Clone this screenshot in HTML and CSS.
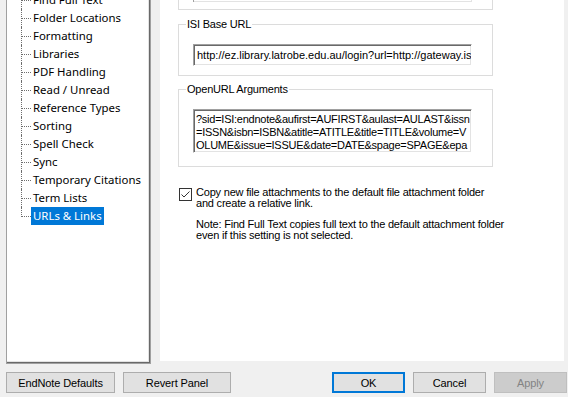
FILE: index.html
```html
<!DOCTYPE html>
<html>
<head>
<meta charset="utf-8">
<link rel="stylesheet" href="styles.css">
</head>
<body>
<div class="window">
  <div class="main">
    <div class="tree">
      <ul class="tree-list">
        <li><span>Find Full Text</span></li>
        <li><span>Folder Locations</span></li>
        <li><span>Formatting</span></li>
        <li><span>Libraries</span></li>
        <li><span>PDF Handling</span></li>
        <li><span>Read / Unread</span></li>
        <li><span>Reference Types</span></li>
        <li><span>Sorting</span></li>
        <li><span>Spell Check</span></li>
        <li><span>Sync</span></li>
        <li><span>Temporary Citations</span></li>
        <li><span>Term Lists</span></li>
        <li class="selected"><span>URLs &amp; Links</span></li>
      </ul>
    </div>
    <div class="panel">
      <div class="group-cut"><div class="textbox-cut"></div></div>
      <fieldset class="group group-isi">
        <legend>ISI Base URL</legend>
        <div class="textbox">http://ez.library.latrobe.edu.au/login?url=http://gateway.is</div>
      </fieldset>
      <fieldset class="group group-open">
        <legend>OpenURL Arguments</legend>
        <div class="textarea">
          <div class="ta-line">?sid=ISI:endnote&amp;aufirst=AUFIRST&amp;aulast=AULAST&amp;issn</div>
          <div class="ta-line">=ISSN&amp;isbn=ISBN&amp;atitle=ATITLE&amp;title=TITLE&amp;volume=V</div>
          <div class="ta-line">OLUME&amp;issue=ISSUE&amp;date=DATE&amp;spage=SPAGE&amp;epa</div>
        </div>
      </fieldset>
      <div class="check-row">
        <span class="checkbox"><svg width="11" height="11" viewBox="0 0 11 11"><polyline points="1.5,5.5 4,8 9.5,2.5" fill="none" stroke="#333" stroke-width="1"/></svg></span>
        <div class="check-text">Copy new file attachments to the default file attachment folder<br>and create a relative link.</div>
      </div>
      <div class="note">Note: Find Full Text copies full text to the default attachment folder<br>even if this setting is not selected.</div>
    </div>
  </div>
  <div class="footer">
    <button class="btn btn-wide">EndNote Defaults</button>
    <button class="btn btn-revert">Revert Panel</button>
    <button class="btn btn-ok">OK</button>
    <button class="btn">Cancel</button>
    <button class="btn btn-disabled">Apply</button>
  </div>
</div>
</body>
</html>
```

FILE: styles.css
```css
html, body {
  margin: 0;
  padding: 0;
  background: #f0f0f0;
}
body {
  font-family: "Liberation Sans", Arial, sans-serif;
  font-size: 11px;
  letter-spacing: -0.2px;
  color: #000;
}
.window {
  width: 568px;
  height: 397px;
  overflow: hidden;
}
.main {
  display: flex;
  align-items: flex-start;
  height: 364px;
}
.tree {
  margin-left: 6px;
  width: 145px;
  height: 364px;
  box-sizing: border-box;
  background: #fff;
  border-left: 1px solid #a0a0a0;
  border-right: 1px solid #a0a0a0;
  border-bottom: 1px solid #a0a0a0;
  box-shadow: inset -1px -1px #696969, inset -2px -2px #e3e3e3;
  overflow: hidden;
}
.tree-list {
  list-style: none;
  margin: -9px 0 0 14px;
  padding: 0;
  font-family: "Noto Sans", "Open Sans", sans-serif;
  font-size: 11.4px;
  letter-spacing: 0;
}
.tree-list li {
  position: relative;
  height: 18px;
  line-height: 18px;
  padding-left: 10px;
  white-space: nowrap;
}
.tree-list li::before {
  content: "";
  position: absolute;
  left: 0;
  top: 0;
  height: 100%;
  border-left: 1px dotted #6e6e6e;
}
.tree-list li:last-child::before {
  height: 10px;
}
.tree-list li::after {
  content: "";
  position: absolute;
  left: 1px;
  top: 9px;
  width: 9px;
  border-top: 1px dotted #6e6e6e;
}
.tree-list span {
  display: inline-block;
  padding: 0 2px;
  height: 18px;
}
.tree-list .selected span {
  background: #0078d7;
  color: #fff;
}
.panel {
  margin-left: 9px;
  width: 404px;
  height: 361px;
  box-sizing: border-box;
  background: #fff;
  padding-left: 18px;
  overflow: hidden;
}
.group-cut {
  width: 315px;
  height: 10px;
  box-sizing: border-box;
  border: 1px solid #dcdcdc;
  border-top: none;
  padding-left: 14px;
}
.textbox-cut {
  width: 279px;
  height: 2px;
  box-sizing: border-box;
  border-left: 1px solid #a0a0a0;
  box-shadow: inset -1px -1px #e3e3e3;
}
.group {
  width: 315px;
  box-sizing: border-box;
  border: 1px solid #dcdcdc;
  margin: 0;
  padding: 0 7px 9px 7px;
  min-width: 0;
}
.group legend {
  padding: 0 1px;
  line-height: 13px;
  font-size: 11px;
}
.group-isi {
  margin-top: 8px;
}
.group-open {
  margin-top: 7px;
  padding-bottom: 13px;
}
.textbox, .textarea {
  margin-top: 13px;
  margin-left: 7px;
  width: 279px;
  box-sizing: border-box;
  border: 1px solid;
  border-color: #a0a0a0 #fff #fff #a0a0a0;
  box-shadow: inset 1px 1px #696969, inset -1px -1px #e3e3e3;
  white-space: nowrap;
  overflow: hidden;
}
.textbox {
  height: 22px;
  line-height: 20px;
  padding: 0 2px 0 3px;
  letter-spacing: 0;
}
.textarea {
  height: 44px;
  padding: 3px 2px 0 2px;
  line-height: 13px;
  letter-spacing: -0.25px;
}
.check-row {
  display: flex;
  align-items: flex-start;
  margin-top: 20px;
  margin-left: 1px;
  gap: 4px;
}
.checkbox {
  width: 13px;
  height: 13px;
  box-sizing: border-box;
  border: 1px solid #333;
  background: #fff;
  margin-top: 1px;
  flex: none;
}
.checkbox svg {
  display: block;
}
.check-text {
  line-height: 11px;
}
.note {
  margin-top: 10px;
  margin-left: 18px;
  line-height: 11px;
}
.footer {
  display: flex;
  gap: 8px;
  padding: 8px 1px 0 6px;
}
.btn {
  height: 21px;
  width: 73px;
  box-sizing: border-box;
  background: #e1e1e1;
  border: 1px solid #adadad;
  font-family: "Liberation Sans", Arial, sans-serif;
  font-size: 11px;
  letter-spacing: -0.1px;
  color: #000;
  padding: 0;
  margin: 0;
}
.btn-wide {
  width: 109px;
}
.btn-revert {
  width: 108px;
}
.btn-ok {
  margin-left: auto;
  border: 2px solid #0078d7;
}
.btn-disabled {
  background: #cccccc;
  border-color: #bfbfbf;
  color: #838383;
}
```
